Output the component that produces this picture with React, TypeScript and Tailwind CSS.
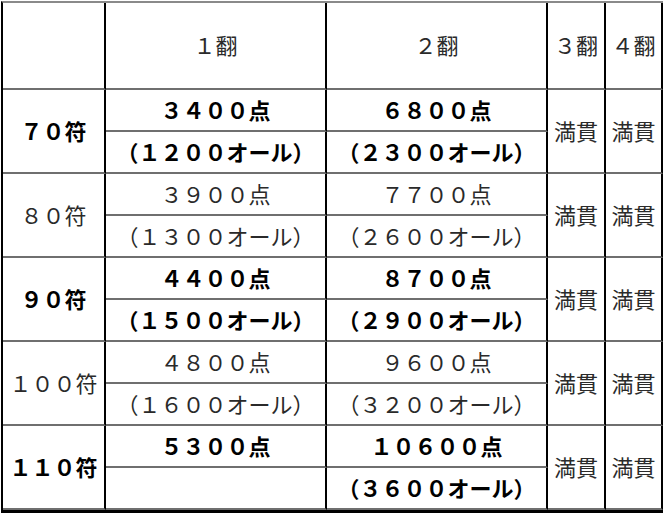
import React from 'react'

type Row = {
  fu: string
  ron: string
  tsumo: string
  ron2: string
  tsumo2: string
  bold: boolean
}

const rows: Row[] = [
  { fu: '７０符', ron: '３４００点', tsumo: '（１２００オール）', ron2: '６８００点', tsumo2: '（２３００オール）', bold: true },
  { fu: '８０符', ron: '３９００点', tsumo: '（１３００オール）', ron2: '７７００点', tsumo2: '（２６００オール）', bold: false },
  { fu: '９０符', ron: '４４００点', tsumo: '（１５００オール）', ron2: '８７００点', tsumo2: '（２９００オール）', bold: true },
  { fu: '１００符', ron: '４８００点', tsumo: '（１６００オール）', ron2: '９６００点', tsumo2: '（３２００オール）', bold: false },
  { fu: '１１０符', ron: '５３００点', tsumo: '', ron2: '１０６００点', tsumo2: '（３６００オール）', bold: true },
]

// every cell draws its own right (black) and bottom (gray) edge
const cell = 'flex items-center justify-center pb-[3px] border-r-2 border-r-black border-b-2 border-b-[#6f6f6f] whitespace-nowrap'

export default function App() {
  return (
    <div className="min-h-screen bg-white pl-[1px] pt-[1px]">
      <div
        className="grid w-[662px] grid-cols-[103px_221px_221px_58px_57px] grid-rows-[87px_repeat(10,42px)] border-l-2 border-t-2 border-b-[3px] border-l-black border-t-[#8a8a8a] border-b-black text-[22px] leading-none text-[#2a2a2a]"
        style={{ fontFamily: '"Noto Sans CJK JP", "Noto Sans", sans-serif' }}
      >
        {/* header */}
        <div className={cell}></div>
        <div className={cell}>１翻</div>
        <div className={cell}>２翻</div>
        <div className={cell}>３翻</div>
        <div className={cell}>４翻</div>

        {rows.map((r) => {
          const weight = r.bold ? 'font-bold text-black' : 'font-normal'
          return (
            <React.Fragment key={r.fu}>
              <div className={`${cell} row-span-2 ${weight}`}>{r.fu}</div>
              <div className={`${cell} ${weight}`}>{r.ron}</div>
              <div className={`${cell} ${weight}`}>{r.ron2}</div>
              <div className={`${cell} row-span-2`}>満貫</div>
              <div className={`${cell} row-span-2`}>満貫</div>
              <div className={`${cell} ${weight}`}>{r.tsumo}</div>
              <div className={`${cell} ${weight}`}>{r.tsumo2}</div>
            </React.Fragment>
          )
        })}
      </div>
    </div>
  )
}
